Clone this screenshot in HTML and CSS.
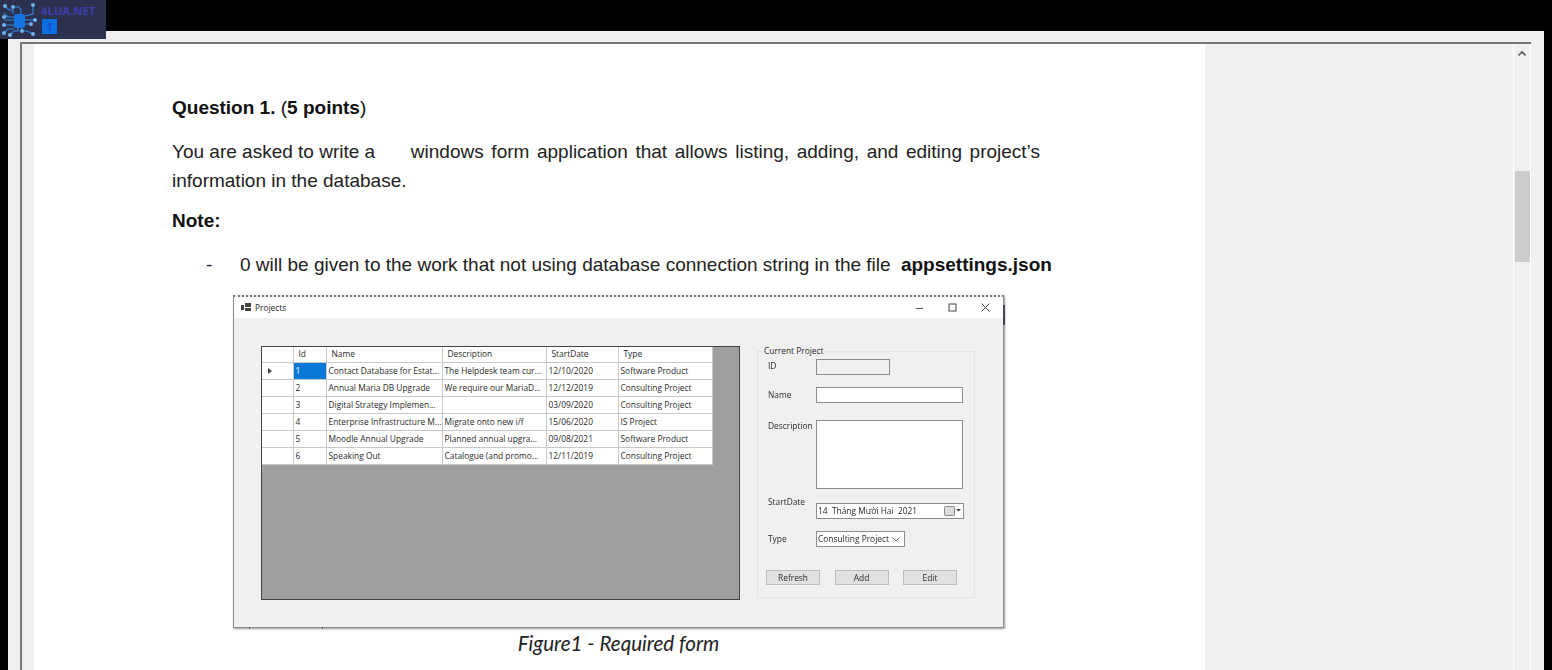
FILE: index.html
```html
<!DOCTYPE html>
<html lang="en">
<head>
<meta charset="utf-8">
<title>Question 1</title>
<link rel="stylesheet" href="styles.css">
</head>
<body>
<div class="app">
  <div class="logo">
    <svg class="logo-icon" width="40" height="38" viewBox="0 0 40 38" fill="none" stroke="#2f86d8" stroke-width="1.2">
      <rect x="14" y="13" width="11" height="14" rx="2" fill="#1474e0" stroke="none"/>
      <path d="M5 5 L9 9 H13 V13M13 6 H19 L21 9 V13M33 4 V13 L25 15M4 16 H14M4 19 H14M4 24 H14M25 19 H35M25 23 H31M4 32 L8 28 H14M10 34 L14 30 H18 V27M22 27 V30 H27 L33 33M4 12 L8 16"/>
      <g fill="#6fb1ea" stroke="none">
        <circle cx="5" cy="5" r="2"/><circle cx="13" cy="6" r="2"/><circle cx="33" cy="4" r="2"/>
        <circle cx="4" cy="16" r="2"/><circle cx="4" cy="24" r="2"/><circle cx="35" cy="19" r="2"/>
        <circle cx="31" cy="23" r="2"/><circle cx="4" cy="32" r="2"/><circle cx="10" cy="34" r="2"/>
        <circle cx="33" cy="33" r="2"/><circle cx="22" cy="30" r="2"/>
      </g>
    </svg>
    <div class="logo-text">
      <span class="logo-name">4LUA.NET</span>
      <span class="logo-badge">1</span>
    </div>
  </div>
  <div class="topbar"></div>
  <div class="frame">
    <div class="viewer">
      <main class="page">
        <h2 class="question"><b>Question 1.</b> (<b>5 points</b>)</h2>
        <p class="intro"><span class="line"><span>You are asked to write a</span><span class="wide">windows form application that allows listing, adding, and editing project’s</span></span>information in the database.</p>
        <h3 class="note">Note:</h3>
        <p class="item"><span class="dash">-</span><span>0 will be given to the work that not using database connection string in the file <b class="file">appsettings.json</b></span></p>
        <figure class="figure">
          <div class="window">
            <div class="titlebar">
              <div class="title">
                <svg width="10" height="9" viewBox="0 0 10 9" fill="#444"><rect x="0" y="2" width="3" height="5"/><rect x="4" y="0" width="6" height="4"/><rect x="4" y="5" width="6" height="3"/></svg>
                <span>Projects</span>
              </div>
              <div class="controls">
                <svg width="9" height="9" viewBox="0 0 9 9" stroke="#555" fill="none"><path d="M1 5.500H8"/></svg>
                <svg width="9" height="9" viewBox="0 0 9 9" stroke="#444" fill="none"><rect x="1" y="1" width="7" height="7"/></svg>
                <svg width="9" height="9" viewBox="0 0 9 9" stroke="#444" fill="none"><path d="M.5 .5L8.500 8.500M8.500 .5L.5 8.500"/></svg>
              </div>
            </div>
            <div class="form-body">
              <div class="grid">
                <table class="table">
                  <thead>
                    <tr><th class="rowhead"></th><th class="c-id">Id</th><th class="c-name">Name</th><th class="c-desc">Description</th><th class="c-start">StartDate</th><th class="c-type">Type</th></tr>
                  </thead>
                  <tbody>
                    <tr><td class="rowhead"><span class="arrow"></span></td><td class="selected">1</td><td>Contact Database for Estat...</td><td>The Helpdesk team cur...</td><td>12/10/2020</td><td>Software Product</td></tr>
                    <tr><td class="rowhead"></td><td>2</td><td>Annual Maria DB Upgrade</td><td>We require our MariaD...</td><td>12/12/2019</td><td>Consulting Project</td></tr>
                    <tr><td class="rowhead"></td><td>3</td><td>Digital Strategy Implemen...</td><td></td><td>03/09/2020</td><td>Consulting Project</td></tr>
                    <tr><td class="rowhead"></td><td>4</td><td>Enterprise Infrastructure M...</td><td>Migrate onto new i/f</td><td>15/06/2020</td><td>IS Project</td></tr>
                    <tr><td class="rowhead"></td><td>5</td><td>Moodle Annual Upgrade</td><td>Planned annual upgra...</td><td>09/08/2021</td><td>Software Product</td></tr>
                    <tr><td class="rowhead"></td><td>6</td><td>Speaking Out</td><td>Catalogue (and promo...</td><td>12/11/2019</td><td>Consulting Project</td></tr>
                  </tbody>
                </table>
              </div>
              <section class="group">
                <span class="legend">Current Project</span>
                <div class="field f-id"><label>ID</label><div class="input disabled"></div></div>
                <div class="field f-name"><label>Name</label><div class="input wide-input"></div></div>
                <div class="field f-desc"><label>Description</label><div class="input wide-input area"></div></div>
                <div class="field f-date"><label>StartDate</label>
                  <div class="input date"><span>14 &nbsp;Tháng Mười Hai &nbsp;2021</span>
                    <svg width="18" height="10" viewBox="0 0 18 10"><rect x="0.5" y="0.5" width="10" height="9" rx="1" fill="#ddd" stroke="#888"/><path d="M12 3H17L14.500 5.500Z" fill="#444"/></svg>
                  </div>
                </div>
                <div class="field f-type"><label>Type</label>
                  <div class="input combo"><span>Consulting Project</span>
                    <svg width="8" height="5" viewBox="0 0 8 5" fill="none" stroke="#666"><path d="M.5 .5L4 4L7.500 .5"/></svg>
                  </div>
                </div>
                <div class="buttons"><button type="button">Refresh</button><button type="button">Add</button><button type="button">Edit</button></div>
              </section>
            </div>
          </div>
          <figcaption class="caption">Figure1 - Required form</figcaption>
        </figure>
      </main>
      <aside class="side"></aside>
      <div class="scrollbar">
        <svg class="up" width="10" height="7" viewBox="0 0 10 7" fill="none" stroke="#555" stroke-width="1.6"><path d="M1.500 5.500L5 2L8.500 5.500"/></svg>
        <div class="thumb"></div>
      </div>
    </div>
  </div>
</div>
</body>
</html>
```
FILE: styles.css
```css
* { box-sizing: border-box; }
html, body { margin: 0; height: 100%; background: #000; overflow: hidden; }
.app { position: relative; height: 670px; display: flex; flex-direction: column; font-family: "Liberation Sans", Arial, sans-serif; color: #111; }
.topbar { height: 31px; flex: none; }
.logo { position: absolute; left: 0; top: 0; width: 106px; height: 39px; background: #2d3150; display: flex; gap: 1px; z-index: 2; }
.logo-icon { margin-top: 1px; flex: none; }
.logo-text { display: flex; flex-direction: column; padding: 5px 0 0 0; }
.logo-name { font: 700 11px/12px "Open Sans", sans-serif; color: #3b3fae; letter-spacing: .2px; }
.logo-badge { margin: 2px 0 0 1px; width: 15px; height: 15px; background: #0a6fe2; color: #1f48c8; font: 700 11px/15px "Open Sans", sans-serif; text-align: center; }

.frame { flex: 1; margin: 0 8px; background: #f0f0f0; padding: 11px 13px 0 12px; display: flex; min-height: 0; }
.viewer { flex: 1; display: flex; border-top: 2px solid #777; border-left: 2px solid #777; padding-left: 12px; min-height: 0; }
.page { width: 1171px; flex: none; background: #fff; padding: 52px 0 0 138px; overflow: hidden; }
.side { flex: 1; background: #f0f0f0; }
.scrollbar { width: 18px; flex: none; border-left: 1px solid #fff; border-right: 1px solid #fff; background: #f0f0f0; display: flex; flex-direction: column; align-items: center; padding-top: 6px; }
.up { flex: none; }
.thumb { width: 15px; height: 91px; margin-top: 114px; background: #cdcdcd; }

.question { margin: 0; font-size: 19px; line-height: 24px; font-weight: 400; }
.intro { margin: 17px 0 0; font-size: 19px; line-height: 29px; color: #222; width: 868px; }
.line { display: flex; justify-content: space-between; white-space: nowrap; }
.wide { word-spacing: 2.350px; }
.note { margin: 14px 0 0; font-size: 19px; line-height: 24px; font-weight: 700; }
.item { margin: 20px 0 0; padding-left: 34px; font-size: 19px; line-height: 24px; color: #222; display: flex; gap: 28px; white-space: nowrap; }
.dash { width: 6px; }
.file { color: #111; margin-left: 5px; }

.figure { margin: 18px 0 0 61px; width: 771px; }
.window { position: relative; height: 333px; width: 771px; border: 1px solid #8c8c8c; border-top: 2px dotted #777; box-shadow: 1px 1px 2px #999; background: #f0f0f0; display: flex; flex-direction: column; font: 8.400px/12px "Open Sans", sans-serif; color: #2a2a2a; filter: blur(.3px); }
.window::after { content: ""; position: absolute; right: -2px; top: 8px; width: 2px; height: 20px; background: #445; }
.window::before { content: ""; position: absolute; bottom: -2px; left: 15px; width: 1px; height: 2px; background: #555; box-shadow: 73px 0 #555; }
.titlebar { height: 21px; flex: none; background: #fff; display: flex; justify-content: space-between; align-items: center; padding: 0 13px 0 7px; }
.title { display: flex; align-items: center; gap: 4px; }
.controls { display: flex; gap: 24px; }
.form-body { flex: 1; display: flex; padding: 28px 0 0 27px; align-items: flex-start; }

.grid { width: 479px; height: 254px; flex: none; background: #9f9f9f; border: 1px solid #444; }
.table { border-collapse: collapse; table-layout: fixed; width: 450px; background: #fff; }
.table th, .table td { height: 17px; padding: 0 2px; font-weight: 400; text-align: left; border-right: 1px solid #c9c9c9; border-bottom: 1px solid #c9c9c9; white-space: nowrap; overflow: hidden; }
.table th { height: 15px; padding-left: 5px; }
.rowhead { width: 31px; }
.c-id { width: 33px; }
.c-name { width: 116px; }
.c-desc { width: 104px; }
.c-start { width: 72px; }
.c-type { width: 94px; }
.table td.selected { background: #0a78d7; color: #fff; }
.arrow { display: block; width: 0; height: 0; margin-left: 4px; border-left: 4px solid #444; border-top: 3px solid transparent; border-bottom: 3px solid transparent; }

.group { margin: 5px 0 0 17px; width: 218px; height: 247px; border: 1px solid #e3e3e3; position: relative; display: flex; flex-direction: column; }
.legend { position: absolute; left: 6px; top: -7px; background: #f0f0f0; padding-right: 1px; }
.field { display: flex; padding-left: 10px; }
.field label { width: 48px; flex: none; }
.f-id { margin-top: 7px; align-items: flex-start; }
.f-id label { margin-top: 1px; }
.f-name { margin-top: 12px; align-items: center; }
.f-desc { margin-top: 17px; }
.f-date { margin-top: 14px; }
.f-date label { margin-top: -7px; }
.f-type { margin-top: 12px; align-items: center; }
.input { height: 16px; background: #fff; border: 1px solid #8e8e8e; }
.disabled { width: 74px; background: #f0f0f0; }
.wide-input { width: 147px; }
.area { height: 69px; }
.date { width: 148px; display: flex; align-items: center; justify-content: space-between; padding: 0 1px 0 1px; }
.combo { width: 89px; display: flex; align-items: center; gap: 3px; padding-left: 1px; }
.buttons { display: flex; gap: 14.500px; margin: 23px 0 0 8px; }
.buttons button { width: 54px; height: 15px; padding: 0; background: #e1e1e1; border: 1px solid #bdbdbd; font: inherit; color: #2a2a2a; }

.caption { margin-top: 3px; text-align: center; font: italic 20.600px/24px Lato, sans-serif; color: #222; width: 771px; }
```
